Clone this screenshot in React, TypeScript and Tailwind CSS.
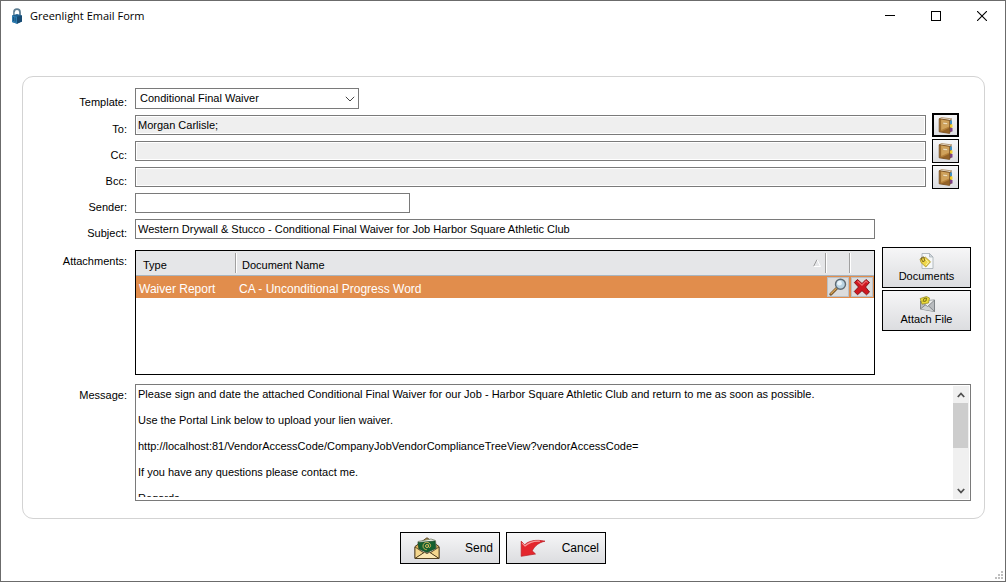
import type { ReactNode } from 'react'

const labelCls = 'w-28 shrink-0 pr-2 text-right text-[11px] leading-[14px]'
const buttonFace = 'border border-black bg-linear-to-b from-[#f6f6f7] to-[#dcdde0]'

function LockIcon() {
  return (
    <svg className="h-4 w-3" viewBox="0 0 12 16">
      <path d="M3 8V4.200a3 3 0 0 1 6 0V8" fill="none" stroke="#5d7d92" strokeWidth="1.800" />
      <path d="M3.300 7V4.200" stroke="#b9cdd8" strokeWidth=".7" />
      <path d="M1 7.500 6 6l5 1.500v6L6 15.800 1 14z" fill="#1f608f" />
      <path d="M1 7.500 6 8.800V15.800L1 14z" fill="#2d7cb0" />
      <path d="M6 8.800 11 7.500v6L6 15.800z" fill="#174a72" />
      <path d="M2.500 9v4M4.200 9.500v4.200" stroke="#174a72" strokeWidth=".8" />
    </svg>
  )
}

function BookIcon() {
  return (
    <svg className="h-[17px] w-4" viewBox="0 0 16 17">
      <path d="M11.500 2l2 .8v12l-2 1z" fill="#7d5a30" />
      <path d="M12 3.500h2v3.500h-2z" fill="#3f93c9" />
      <path d="M12 7.500h2.500v3H12z" fill="#f5d22a" />
      <path d="M12 11h2.500v3.500H12z" fill="#7c3f86" />
      <path d="M1.200 1.800 3.500.6l10.300 1.300-2.200 1.500z" fill="#f5efe2" stroke="#8a5a22" strokeWidth=".6" />
      <path d="M1.200 1.800l10.400 1.600v13L1.200 14.800z" fill="#b5803a" stroke="#6f4519" strokeWidth=".8" />
      <path d="M2.600 2.500v12.200" stroke="#8d6128" strokeWidth=".7" />
      <path d="M3.200 2.600l8 1.300v5.500L3.200 13z" fill="#dcb16a" opacity=".7" />
      <path d="M5 5.300l4.500.6v1.700L5 7z" fill="#f6e8c8" stroke="#b28646" strokeWidth=".4" />
      <path d="M3 14.800l8.500-4v5.300z" fill="#84561f" opacity=".7" />
    </svg>
  )
}

function DocumentIcon() {
  return (
    <svg className="h-4 w-4" viewBox="0 0 16 16">
      <path d="M3 .5h7.500L14 4v11.500H3z" fill="#f6f8f9" stroke="#a3acb3" strokeWidth=".8" />
      <path d="M10.500.5V4H14z" fill="#d3dadf" stroke="#a3acb3" strokeWidth=".7" />
      <path d="M1 6l5.500-1.800 5 4.600L6.800 14 2 9.500z" fill="#f0d848" stroke="#a58a22" strokeWidth=".8" />
      <path d="M2 5l2.500-1.200L6 7.500 3.800 8.800z" fill="none" stroke="#6f5b18" strokeWidth=".9" />
      <path d="M6.500 6.500l3 2.500-2.500 3" fill="none" stroke="#fff5ae" />
    </svg>
  )
}

function AttachIcon() {
  return (
    <svg className="h-4 w-4" viewBox="0 0 16 16">
      <path d="M1.500 5l14-1v11.500L1.500 13z" fill="#b9bcbf" stroke="#6b7074" strokeWidth=".8" />
      <path d="M1.500 13l6-5 8 7.500" fill="#cfd2d4" stroke="#6b7074" strokeWidth=".7" />
      <path d="M2.200 5.200l6.300 5.300 6.800-6.200" fill="#eceded" stroke="#6b7074" strokeWidth=".7" />
      <path d="M1.200 2.500l6.300-2 3 1.500-1 5-6.500 1.200z" fill="#ead93a" stroke="#8f8420" strokeWidth=".7" />
      <path d="M4 5.500l1-3 2.500-.5L7 5 4.500 5.500" fill="none" stroke="#6c640f" strokeWidth=".9" />
    </svg>
  )
}

function MagnifierIcon() {
  return (
    <svg className="h-[18px] w-[18px]" viewBox="0 0 18 18">
      <path d="M1.800 16.200 8 10" stroke="#6b4a22" strokeWidth="2.800" strokeLinecap="round" />
      <path d="M2 15.800 7.300 10.500" stroke="#d6a558" strokeWidth="1.300" strokeLinecap="round" />
      <circle cx="11.500" cy="6.300" r="5" fill="#b9d3e2" stroke="#5f6b74" strokeWidth="1.400" />
      <circle cx="10.500" cy="5.200" r="2.400" fill="#e9f3f9" />
    </svg>
  )
}

function DeleteIcon() {
  return (
    <svg className="h-[18px] w-[18px]" viewBox="0 0 18 18">
      <path
        d="M4.500 1.500 9 5.500 13 1.500 16.500 4.500 12.500 9 16.500 14 13.500 16.800 9 12.700 4.500 16.800 1.300 13.500 5.500 9 1.300 4.500z"
        fill="#cf1820"
        stroke="#7b0d12"
        strokeWidth=".9"
        strokeLinejoin="round"
      />
      <path d="M4.500 3 9 7.200 13 3.100l1.700 1.500" fill="none" stroke="#ee6a6c" strokeWidth="1.200" />
    </svg>
  )
}

function SendIcon() {
  return (
    <svg className="h-[22px] w-[26px]" viewBox="0 0 26 22">
      <path d="M1 9.500 13 .8l12 8.700v12H1z" fill="#d9ae58" stroke="#4b3a1c" />
      <path d="M4 4.500 17 2l4.500 1.500 1 9L13 17l-8-4z" fill="#f1f1e6" stroke="#5f6b52" strokeWidth=".7" />
      <path d="M4 5.500 21 4l.8 7.500L13 15.500l-8-3.500z" fill="#14602f" stroke="#0d3d1e" strokeWidth=".6" />
      <circle cx="13" cy="9" r="1.500" fill="none" stroke="#d9b95e" />
      <path
        d="M14.600 7.500v2.500c.8 1 2.200.2 2-1.500-.3-2.200-2-3.200-3.800-3.200-2.200 0-3.800 1.700-3.800 3.800s1.700 3.600 3.800 3.600"
        fill="none"
        stroke="#d9b95e"
        strokeWidth=".9"
      />
      <path d="M1 10l9 6-9 5.500z" fill="#f4d68c" stroke="#4b3a1c" strokeWidth=".8" />
      <path d="M25 10l-9 6 9 5.500z" fill="#f4d68c" stroke="#4b3a1c" strokeWidth=".8" />
      <path d="M1 21.500l9.500-6.300 2.500 1.300 2.500-1.300L25 21.500z" fill="#fbe8b2" stroke="#4b3a1c" strokeWidth=".9" />
    </svg>
  )
}

function CancelIcon() {
  return (
    <svg className="h-[18px] w-[26px]" viewBox="0 0 26 18">
      <path
        d="M1.200 2.200 4.800 5.800C8.500 1.800 16 .2 25 2.200 19 3.500 15 6.500 12.200 11.800L15.500 15 1.200 17.300z"
        fill="#e4262d"
        stroke="#b91a21"
        strokeWidth=".7"
        strokeLinejoin="round"
      />
      <path d="M2.200 4.200 5 7C9.500 3 15 1.800 20 2.200" fill="none" stroke="#f79a9a" strokeWidth="1.100" />
    </svg>
  )
}

function Field({ id, label, children }: { id: string; label: string; children: ReactNode }) {
  return (
    <div className="flex items-start">
      <label htmlFor={id} className={`${labelCls} pt-[7px]`}>
        {label}
      </label>
      {children}
    </div>
  )
}

function RecipientField({ id, label, value, active }: { id: string; label: string; value: string; active?: boolean }) {
  return (
    <div className="flex h-6 items-center">
      <label htmlFor={id} className={`${labelCls} pt-[7px]`}>
        {label}
      </label>
      <input
        id={id}
        readOnly
        defaultValue={value}
        className="h-5 min-w-0 flex-1 border border-[#7a7a7a] bg-[#efefef] px-0.5 text-[11px] shadow-[inset_0_0_0_1px_#fff] outline-none"
      />
      <button
        type="button"
        aria-label={`${label} address book`}
        className={`ml-1.5 mr-3 flex h-6 w-[27px] items-center justify-center ${buttonFace} ${active ? 'border-2' : ''}`}
      >
        <BookIcon />
      </button>
    </div>
  )
}

function TitleBar() {
  return (
    <header className="flex h-[30px] items-center pl-2.5">
      <LockIcon />
      <h1 className="ml-[7px] flex-1 font-['Open_Sans','Noto_Sans',sans-serif] text-[11px]">Greenlight Email Form</h1>
      <button type="button" aria-label="Minimize" className="flex h-full w-[46px] items-center justify-center">
        <svg className="h-2.5 w-2.5" viewBox="0 0 10 10" shapeRendering="crispEdges">
          <path d="M0 4.500h10" stroke="#000" />
        </svg>
      </button>
      <button type="button" aria-label="Maximize" className="flex h-full w-[46px] items-center justify-center">
        <svg className="h-2.5 w-2.5" viewBox="0 0 10 10" shapeRendering="crispEdges">
          <path d="M.5.5h9v9h-9z" fill="none" stroke="#000" />
        </svg>
      </button>
      <button type="button" aria-label="Close" className="flex h-full w-[46px] items-center justify-center">
        <svg className="h-2.5 w-2.5" viewBox="0 0 10 10">
          <path d="M0 0l10 10M10 0L0 10" stroke="#000" strokeWidth="1.100" />
        </svg>
      </button>
    </header>
  )
}

function AttachmentsTable() {
  const th = 'h-6 border-b border-[#a9b5bf] p-0 text-left font-normal'
  const sep = 'flex h-5 items-center border-l border-[#a0a0a0] shadow-[inset_1px_0_0_#fff]'
  const cellButton = 'flex h-5 w-[22px] items-center justify-center border border-[#b9c0c6] bg-[#dcdcdc]'
  return (
    <div className="min-h-[125px] min-w-0 flex-1 border border-black bg-white">
      <table aria-labelledby="attachments-label" className="w-full table-fixed border-collapse text-[11px]">
        <colgroup>
          <col className="w-[99px]" />
          <col />
          <col className="w-6" />
          <col className="w-[25px]" />
        </colgroup>
        <thead className="bg-[#e5e6e8]">
          <tr>
            <th className={`${th} pl-[7px]`}>
              <span className="block pt-1">Type</span>
            </th>
            <th className={th}>
              <div className={`${sep} justify-between pl-1.5 pr-1`}>
                <span className="pt-1">Document Name</span>
                <svg className="h-2 w-2" viewBox="0 0 8 8">
                  <path d="M.5 7.500 4 .5" stroke="#9a9a9a" fill="none" />
                  <path d="M4 .5 7.500 7.500H.5" stroke="#fff" fill="none" />
                </svg>
              </div>
            </th>
            <th className={th} aria-label="View">
              <div className={sep} />
            </th>
            <th className={th} aria-label="Delete">
              <div className={sep} />
            </th>
          </tr>
        </thead>
        <tbody>
          <tr className="h-[23px] bg-[#e18d4c] text-[12px] leading-4 text-white">
            <td className="p-0 pl-[3px] pt-1">Waiver Report</td>
            <td className="p-0 pl-1 pt-1">CA - Unconditional Progress Word</td>
            <td className="p-0 pl-0.5">
              <button type="button" aria-label="View attachment" className={cellButton}>
                <MagnifierIcon />
              </button>
            </td>
            <td className="p-0 pl-0.5">
              <button type="button" aria-label="Delete attachment" className={cellButton}>
                <DeleteIcon />
              </button>
            </td>
          </tr>
        </tbody>
      </table>
    </div>
  )
}

const message = `Please sign and date the attached Conditional Final Waiver for our Job - Harbor Square Athletic Club and return to me as soon as possible.

Use the Portal Link below to upload your lien waiver.

http://localhost:81/VendorAccessCode/CompanyJobVendorComplianceTreeView?vendorAccessCode=

If you have any questions please contact me.

Regards,`

function MessageBox() {
  return (
    <div className="flex h-[117px] min-w-0 flex-1 border border-[#7a7a7a] bg-white p-px">
      <textarea
        id="message"
        defaultValue={message}
        className="mb-0.5 min-w-0 flex-1 resize-none overflow-hidden px-px pt-0.5 text-[11px] leading-[13px] outline-none"
      />
      <div className="flex w-4 flex-col bg-[#f0f0f0]">
        <button type="button" aria-label="Scroll up" className="flex h-[17px] items-center justify-center">
          <svg className="h-2 w-2" viewBox="0 0 8 8">
            <path d="M.8 6 4 2.500 7.200 6" fill="none" stroke="#505050" strokeWidth="1.800" />
          </svg>
        </button>
        <div className="h-[45px] w-[15px] bg-[#cdcdcd]" />
        <button type="button" aria-label="Scroll down" className="mt-auto flex h-[17px] items-center justify-center">
          <svg className="h-2 w-2" viewBox="0 0 8 8">
            <path d="M.8 2 4 5.500 7.200 2" fill="none" stroke="#505050" strokeWidth="1.800" />
          </svg>
        </button>
      </div>
    </div>
  )
}

export default function App() {
  const stacked = `flex h-[41px] flex-col items-center justify-center text-[11px] leading-[14px] ${buttonFace}`
  return (
    <div className="relative flex min-h-screen flex-col border border-[#6b6b6b] bg-white font-['Liberation_Sans',Arial,sans-serif] text-black">
      <TitleBar />
      <form className="mt-[45px] flex flex-col" onSubmit={(e) => e.preventDefault()}>
        <section className="ml-[21px] mr-5 rounded-[11px] border border-[#d3d3d3] pb-[17px] pr-[13px] pt-[11px]">
          <Field id="template" label="Template:">
            <div className="relative flex w-56">
              <select
                id="template"
                className="h-[21px] w-full appearance-none border border-[#7a7a7a] bg-white pl-1 text-[11px] outline-none"
              >
                <option>Conditional Final Waiver</option>
              </select>
              <svg className="pointer-events-none absolute right-1 top-2 h-1.5 w-2.5" viewBox="0 0 10 6">
                <path d="M.8.8 5 5 9.200.8" fill="none" stroke="#444" />
              </svg>
            </div>
          </Field>
          <div className="mt-1 flex flex-col gap-0.5">
            <RecipientField id="to" label="To:" value="Morgan Carlisle;" active />
            <RecipientField id="cc" label="Cc:" value="" />
            <RecipientField id="bcc" label="Bcc:" value="" />
          </div>
          <div className="mt-1 flex flex-col gap-[5px]">
            <Field id="sender" label="Sender:">
              <input id="sender" className="h-5 w-[275px] border border-[#7a7a7a] px-0.5 text-[11px] outline-none" />
            </Field>
            <Field id="subject" label="Subject:">
              <input
                id="subject"
                defaultValue="Western Drywall & Stucco - Conditional Final Waiver for Job Harbor Square Athletic Club"
                className="mr-24 h-5 min-w-0 flex-1 border border-[#7a7a7a] px-0.5 text-[11px] outline-none"
              />
            </Field>
          </div>
          <div className="mt-[7px] flex items-start">
            <span id="attachments-label" className={`${labelCls} pt-[7px]`}>
              Attachments:
            </span>
            <div className="flex min-w-0 flex-1 items-start pb-px pt-[3px]">
              <AttachmentsTable />
            </div>
            <div className="ml-[7px] flex w-[89px] flex-col gap-0.5">
              <button type="button" className={stacked}>
                <DocumentIcon />
                Documents
              </button>
              <button type="button" className={stacked}>
                <AttachIcon />
                Attach File
              </button>
            </div>
          </div>
          <div className="mt-2 flex items-start">
            <label htmlFor="message" className={`${labelCls} pt-1`}>
              Message:
            </label>
            <MessageBox />
          </div>
        </section>
        <div className="mt-[13px] flex justify-center gap-1.5">
          <button type="submit" className={`flex h-8 w-[100px] items-center justify-between pl-[13px] pr-1.5 text-[12px] ${buttonFace}`}>
            <SendIcon />
            Send
          </button>
          <button type="button" className={`flex h-8 w-[100px] items-center justify-between pl-[13px] pr-1.5 text-[12px] ${buttonFace}`}>
            <CancelIcon />
            Cancel
          </button>
        </div>
      </form>
      <svg className="absolute bottom-0.5 right-0.5 h-2 w-2" viewBox="0 0 8 8" fill="#bfbfbf" shapeRendering="crispEdges">
        <path d="M6 0h2v2H6zM3 3h2v2H3zM6 3h2v2H6zM0 6h2v2H0zM3 6h2v2H3zM6 6h2v2H6z" />
      </svg>
    </div>
  )
}
